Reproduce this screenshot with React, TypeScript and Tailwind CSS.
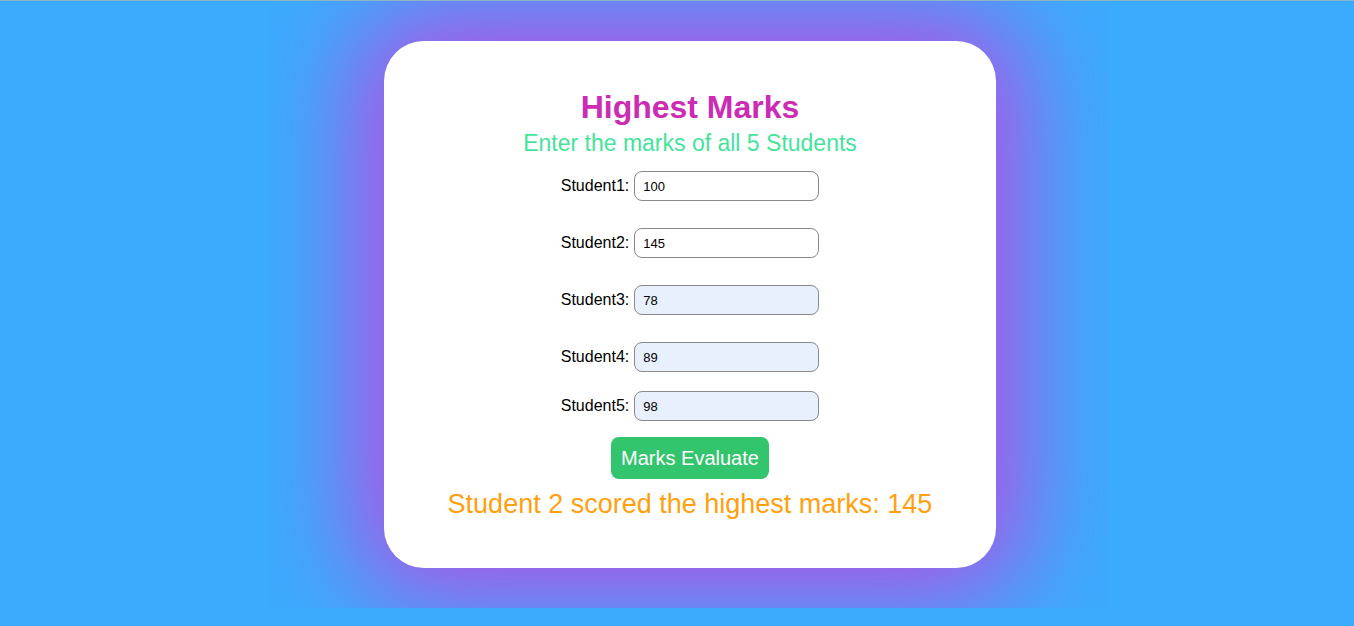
import { useState } from 'react';

const initial = ['100', '145', '78', '89', '98'];

export default function App() {
  const [marks, setMarks] = useState<string[]>(initial);
  const [result, setResult] = useState('Student 2 scored the highest marks: 145');

  const evaluate = () => {
    const nums = marks.map((m) => Number(m) || 0);
    const max = Math.max(...nums);
    setResult(`Student ${nums.indexOf(max) + 1} scored the highest marks: ${max}`);
  };

  return (
    <div className="min-h-screen bg-[#3babfd] pl-[26px] font-['Liberation_Sans',Arial,sans-serif]">
      <div className="-ml-[26px] h-px bg-[#8db4c6]" />
      <div className="mx-auto w-[840px] overflow-hidden py-[40px]">
        <div className="mx-auto flex w-[612px] flex-col items-center rounded-[40px] bg-white pt-[48px] pb-[49px] shadow-[0_0_100px_28px_#b550e4]">
          <h1 className="text-[32px] font-bold leading-[36px] text-[#cb2cb3]">Highest Marks</h1>
          <p className="mt-[5px] text-[23px] leading-[26px] text-[#45e39b]">Enter the marks of all 5 Students</p>

          <div className="mt-[15px] flex flex-col items-center">
            {marks.map((m, i) => (
              <div
                key={i}
                className={`flex items-center ${i === 0 ? '' : i === 4 ? 'mt-[19px]' : 'mt-[27px]'}`}
              >
                <label className="mr-[5px] text-[16px] text-black">Student{i + 1}:</label>
                <input
                  value={m}
                  onChange={(e) => setMarks(marks.map((v, j) => (j === i ? e.target.value : v)))}
                  className={`h-[30px] w-[185px] rounded-[8px] border border-[#8a8a8a] px-[8px] text-[13px] text-black outline-none ${
                    i >= 2 ? 'bg-[#e8f0fe]' : 'bg-white'
                  }`}
                />
              </div>
            ))}
          </div>

          <button
            onClick={evaluate}
            className="mt-[16px] h-[42px] w-[158px] rounded-[8px] bg-[#33c46e] text-[20px] text-white"
          >
            Marks Evaluate
          </button>

          <p className="mt-[10px] text-[27px] leading-[30px] text-[#ffa010]">{result}</p>
        </div>
      </div>
    </div>
  );
}
